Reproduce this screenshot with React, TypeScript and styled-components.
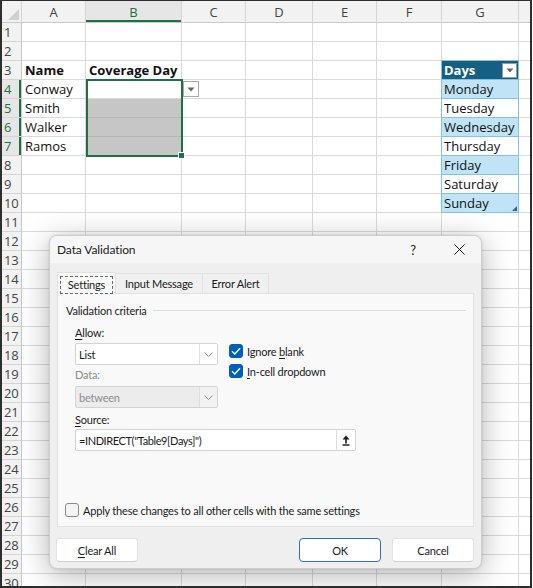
import React from 'react';
import styled, { createGlobalStyle, css } from 'styled-components';

const GlobalStyle = createGlobalStyle`
  html, body { margin: 0; padding: 0; background: #ffffff; }
  body { width: 533px; height: 588px; overflow: hidden; }
`;

const GREEN = '#1e7145';
const BLUE = '#005fb8';
const GRID = '#dadada';

const Frame = styled.div`
  position: relative;
  width: 532px;
  height: 588px;
  box-sizing: border-box;
  border: 2px solid #2e2e2e;
  border-top-width: 1px;
  overflow: hidden;
  font-family: 'Open Sans', 'Noto Sans', sans-serif;
  color: #111;
`;

const Sheet = styled.div`
  display: grid;
  grid-template-columns: 20px 64px 96px 64px 67px 64px 65px 77px 64px;
  grid-template-rows: 22px repeat(30, 19px);
`;

const HeadBase = css`
  box-sizing: border-box;
  background: #f2f2f2;
  color: #444;
  font-size: 13px;
  display: flex;
  align-items: center;
  justify-content: center;
  border-right: 1px solid #d4d4d4;
  border-bottom: 1px solid #d4d4d4;
`;

const Corner = styled.div`
  ${HeadBase};
  position: relative;
  border-bottom-color: #c8c8c8;
  &::after {
    content: '';
    position: absolute;
    right: 2px;
    bottom: 2px;
    border-style: solid;
    border-width: 0 0 11px 11px;
    border-color: transparent transparent #cfcfcf transparent;
  }
`;

const ColHead = styled.div<{ $active?: boolean }>`
  ${HeadBase};
  border-bottom-color: #c8c8c8;
  ${(p) =>
    p.$active &&
    css`
      background: #e6e6e6;
      color: ${GREEN};
      box-shadow: inset 0 -2px 0 ${GREEN};
    `}
`;

const RowHead = styled.div<{ $active?: boolean }>`
  ${HeadBase};
  justify-content: flex-start;
  padding-left: 2px;
  font-size: 13px;
  letter-spacing: -0.3px;
  border-right-color: #c8c8c8;
  ${(p) =>
    p.$active &&
    css`
      background: #e6e6e6;
      color: ${GREEN};
      box-shadow: inset -2px 0 0 ${GREEN};
    `}
`;

const Cell = styled.div<{ $bold?: boolean; $selected?: boolean }>`
  box-sizing: border-box;
  position: relative;
  display: flex;
  align-items: center;
  padding: 0 3px;
  font-size: 13px;
  white-space: nowrap;
  border-right: 1px solid ${GRID};
  border-bottom: 1px solid ${GRID};
  font-weight: ${(p) => (p.$bold ? 700 : 400)};
  ${(p) =>
    p.$selected &&
    css`
      background: #c6c6c6;
      border-color: #b5b5b5;
    `}
`;

const Selection = styled.div`
  position: absolute;
  left: 0;
  top: -1px;
  width: 97px;
  height: 78px;
  box-sizing: border-box;
  border: 2px solid ${GREEN};
  z-index: 3;
  pointer-events: none;
`;

const FillHandle = styled.div`
  position: absolute;
  right: -4px;
  bottom: -4px;
  width: 5px;
  height: 5px;
  background: ${GREEN};
  border: 1px solid #fff;
`;

const CellDropBtn = styled.div`
  margin-left: -2px;
  width: 16px;
  height: 16px;
  box-sizing: border-box;
  background: #fff;
  border: 1px solid #a9a9a9;
  display: flex;
  align-items: center;
  justify-content: center;
`;

const TableCell = styled.div<{ $kind: 'head' | 'band' | 'plain' }>`
  box-sizing: border-box;
  position: relative;
  display: flex;
  align-items: center;
  justify-content: space-between;
  margin-left: -1px;
  padding: 0 1px 0 2px;
  font-size: 13px;
  white-space: nowrap;
  border-left: 1px solid #7fc3e8;
  border-right: 1px solid #7fc3e8;
  border-bottom: 1px solid #7fc3e8;
  background: ${(p) => (p.$kind === 'head' ? '#156082' : p.$kind === 'band' ? '#c0e4f5' : '#ffffff')};
  color: ${(p) => (p.$kind === 'head' ? '#ffffff' : '#111')};
  font-weight: ${(p) => (p.$kind === 'head' ? 700 : 400)};
  ${(p) =>
    p.$kind === 'head' &&
    css`
      margin-top: -1px;
      border-top: 1px solid #7fc3e8;
    `}
`;

const FilterBtn = styled.div`
  width: 15px;
  height: 15px;
  box-sizing: border-box;
  background: #fff;
  border: 1px solid #9a9a9a;
  display: flex;
  align-items: center;
  justify-content: center;
`;

const ResizeMark = styled.div`
  position: absolute;
  right: 1px;
  bottom: 1px;
  border-style: solid;
  border-width: 0 0 5px 5px;
  border-color: transparent transparent #2f62a8 transparent;
`;

const DownTri = () => (
  <svg width="8" height="5" viewBox="0 0 8 5">
    <path d="M0.5 0.5 L7.5 0.5 L4 4.5 Z" fill="#666" />
  </svg>
);

/* ---------- Dialog ---------- */

const Dialog = styled.div`
  position: absolute;
  left: 47px;
  top: 234px;
  width: 433px;
  height: 334px;
  box-sizing: border-box;
  border: 1px solid #cdcdcd;
  border-radius: 8px;
  background: #efefef;
  box-shadow: 0 6px 30px rgba(0, 0, 0, 0.3), 0 0 3px rgba(0, 0, 0, 0.12);
  display: flex;
  flex-direction: column;
  overflow: hidden;
  font-family: 'Lato', 'Noto Sans', sans-serif;
  font-size: 11px;
  letter-spacing: -0.2px;
  color: #1b1b1b;
  z-index: 10;
`;

const TitleBar = styled.div`
  height: 27px;
  flex: none;
  background: #f6f6f6;
  display: flex;
  align-items: center;
  padding-left: 7px;
`;

const Title = styled.div`
  flex: 1;
  font-size: 12px;
  letter-spacing: -0.1px;
`;

const TitleButton = styled.div<{ $w: number }>`
  width: ${(p) => p.$w}px;
  height: 27px;
  display: flex;
  align-items: center;
  justify-content: center;
  font-size: 13px;
`;

const Body = styled.div`
  flex: 1;
  display: flex;
  flex-direction: column;
  padding: 9px 7px 6px;
`;

const Tabs = styled.div`
  display: flex;
  height: 21px;
  align-items: flex-end;
`;

const Tab = styled.div<{ $active?: boolean; $w: number }>`
  width: ${(p) => p.$w}px;
  box-sizing: border-box;
  height: ${(p) => (p.$active ? 22 : 20)}px;
  display: flex;
  align-items: center;
  justify-content: center;
  border: 1px solid #e2e2e2;
  border-bottom: none;
  margin-bottom: ${(p) => (p.$active ? -1 : 0)}px;
  background: ${(p) => (p.$active ? '#f9f9f9' : '#f0f0f0')};
  position: relative;
  z-index: ${(p) => (p.$active ? 2 : 1)};
  & + & {
    margin-left: -1px;
  }
`;

const FocusRect = styled.span`
  border: 1px dashed #6a6a6a;
  padding: 1px 6px 2px;
  margin: 2px 2px 0;
  flex: 1;
  text-align: center;
`;

const Panel = styled.div`
  height: 234px;
  box-sizing: border-box;
  border: 1px solid #e2e2e2;
  background: #f9f9f9;
  display: flex;
  flex-direction: column;
  padding: 8px 7px 8px 8px;
`;

const GroupHead = styled.div`
  display: flex;
  align-items: center;
  height: 16px;
  gap: 6px;
  &::after {
    content: '';
    flex: 1;
    height: 1px;
    background: #dcdcdc;
  }
`;

const Indent = styled.div`
  padding-left: 9px;
  display: flex;
  flex-direction: column;
`;

const TopRow = styled.div`
  display: flex;
  gap: 11px;
  margin-top: 7px;
`;

const LeftCol = styled.div`
  width: 143px;
  display: flex;
  flex-direction: column;
`;

const RightCol = styled.div`
  padding-top: 18px;
  display: flex;
  flex-direction: column;
  gap: 4px;
`;

const Label = styled.div<{ $mt?: number; $disabled?: boolean }>`
  height: 16px;
  line-height: 16px;
  margin-top: ${(p) => p.$mt ?? 0}px;
  color: ${(p) => (p.$disabled ? '#8c8c8c' : '#1b1b1b')};
`;

const Select = styled.div<{ $mt?: number; $disabled?: boolean; $w: number }>`
  width: ${(p) => p.$w}px;
  height: 22px;
  margin-top: ${(p) => p.$mt ?? 0}px;
  box-sizing: border-box;
  border: 1px solid #d3d3d3;
  border-radius: 2px;
  background: ${(p) => (p.$disabled ? '#ececec' : '#ffffff')};
  color: ${(p) => (p.$disabled ? '#8c8c8c' : '#1b1b1b')};
  display: flex;
  align-items: stretch;
`;

const SelectText = styled.div<{ $tight?: boolean }>`
  flex: 1;
  display: flex;
  align-items: center;
  padding-left: 3px;
  white-space: nowrap;
  letter-spacing: ${(p) => (p.$tight ? '-0.4px' : 'inherit')};
`;

const SelectBtn = styled.div<{ $disabled?: boolean }>`
  width: 17px;
  border-left: 1px solid #dedede;
  background: ${(p) => (p.$disabled ? '#f2f2f2' : '#ffffff')};
  display: flex;
  align-items: center;
  justify-content: center;
`;

const Check = styled.div`
  display: flex;
  align-items: center;
  gap: 4px;
  height: 16px;
`;

const Box = styled.div<{ $checked?: boolean }>`
  width: 14px;
  height: 14px;
  box-sizing: border-box;
  border-radius: 3px;
  background: ${(p) => (p.$checked ? BLUE : '#f4f4f4')};
  border: 1px solid ${(p) => (p.$checked ? BLUE : '#8a8a8a')};
  display: flex;
  align-items: center;
  justify-content: center;
`;

const ApplyRow = styled(Check)`
  margin-top: auto;
  margin-left: -1px;
`;

const Buttons = styled.div`
  display: flex;
  margin-top: 11px;
  margin-left: -1px;
  gap: 11px;
`;

const Button = styled.div<{ $default?: boolean; $push?: boolean }>`
  width: 82px;
  height: 24px;
  box-sizing: border-box;
  border-radius: 4px;
  background: #ffffff;
  border: 1px solid ${(p) => (p.$default ? '#2a6fc0' : '#e1e1e1')};
  border-bottom-color: ${(p) => (p.$default ? '#2a6fc0' : '#cfcfcf')};
  display: flex;
  align-items: center;
  justify-content: center;
  margin-left: ${(p) => (p.$push ? 'auto' : '0')};
`;

const Chevron = () => (
  <svg width="9" height="5" viewBox="0 0 9 5">
    <path d="M0.5 0.5 L4.5 4.5 L8.5 0.5" fill="none" stroke="#8a8a8a" strokeWidth="1" />
  </svg>
);

const Tick = () => (
  <svg width="10" height="8" viewBox="0 0 10 8">
    <path d="M1 4.2 L3.8 7 L9 1.2" fill="none" stroke="#fff" strokeWidth="1.4" />
  </svg>
);

const U = styled.span`
  text-decoration: underline;
  text-underline-offset: 2px;
`;

const SourceBtn = styled(SelectBtn)`
  width: 18px;
`;

const UploadIcon = () => (
  <svg width="8" height="11" viewBox="0 0 8 11">
    <path d="M4 0.5 L7.5 4.5 L0.5 4.5 Z" fill="#1b1b1b" />
    <rect x="3.2" y="4" width="1.6" height="4.5" fill="#1b1b1b" />
    <rect x="0.5" y="9.3" width="7" height="1.4" fill="#1b1b1b" />
  </svg>
);

const CloseIcon = () => (
  <svg width="11" height="11" viewBox="0 0 11 11">
    <path d="M0.5 0.5 L10.5 10.5 M10.5 0.5 L0.5 10.5" stroke="#1b1b1b" strokeWidth="1" />
  </svg>
);

const COLS = ['A', 'B', 'C', 'D', 'E', 'F', 'G', 'H'];
const DAYS = ['Monday', 'Tuesday', 'Wednesday', 'Thursday', 'Friday', 'Saturday', 'Sunday'];
const DATA: Record<string, { text: string; bold?: boolean }> = {
  A3: { text: 'Name', bold: true },
  B3: { text: 'Coverage Day', bold: true },
  A4: { text: 'Conway' },
  A5: { text: 'Smith' },
  A6: { text: 'Walker' },
  A7: { text: 'Ramos' },
};

function renderCell(c: string, r: number) {
  const key = c + r;
  if (c === 'G' && r >= 3 && r <= 10) {
    if (r === 3)
      return (
        <TableCell key={key} $kind="head">
          <span>Days</span>
          <FilterBtn>
            <DownTri />
          </FilterBtn>
        </TableCell>
      );
    const i = r - 4;
    return (
      <TableCell key={key} $kind={i % 2 === 0 ? 'band' : 'plain'}>
        {DAYS[i]}
        {r === 10 && <ResizeMark />}
      </TableCell>
    );
  }
  if (c === 'B' && r === 4)
    return (
      <Cell key={key}>
        <Selection>
          <FillHandle />
        </Selection>
      </Cell>
    );
  if (c === 'B' && r >= 5 && r <= 7) return <Cell key={key} $selected />;
  if (c === 'C' && r === 4)
    return (
      <Cell key={key}>
        <CellDropBtn>
          <DownTri />
        </CellDropBtn>
      </Cell>
    );
  const d = DATA[key];
  return (
    <Cell key={key} $bold={d?.bold}>
      {d?.text}
    </Cell>
  );
}

export default function App() {
  const cells: React.ReactNode[] = [<Corner key="corner" />];
  COLS.forEach((c) =>
    cells.push(
      <ColHead key={'h' + c} $active={c === 'B'}>
        {c === 'H' ? '' : c}
      </ColHead>
    )
  );
  for (let r = 1; r <= 30; r++) {
    cells.push(
      <RowHead key={'r' + r} $active={r >= 4 && r <= 7}>
        {r}
      </RowHead>
    );
    COLS.forEach((c) => cells.push(renderCell(c, r)));
  }

  return (
    <>
      <GlobalStyle />
      <Frame>
        <Sheet>{cells}</Sheet>
        <Dialog>
          <TitleBar>
            <Title>Data Validation</Title>
            <TitleButton $w={48}>?</TitleButton>
            <TitleButton $w={44}>
              <CloseIcon />
            </TitleButton>
          </TitleBar>
          <Body>
            <Tabs>
              <Tab $active $w={59}>
                <FocusRect>Settings</FocusRect>
              </Tab>
              <Tab $w={88}>Input Message</Tab>
              <Tab $w={67}>Error Alert</Tab>
            </Tabs>
            <Panel>
              <GroupHead>Validation criteria</GroupHead>
              <Indent>
                <TopRow>
                  <LeftCol>
                    <Label>
                      <U>A</U>llow:
                    </Label>
                    <Select $w={143} $mt={2}>
                      <SelectText>List</SelectText>
                      <SelectBtn>
                        <Chevron />
                      </SelectBtn>
                    </Select>
                    <Label $mt={2} $disabled>
                      Data:
                    </Label>
                    <Select $w={143} $mt={3} $disabled>
                      <SelectText>between</SelectText>
                      <SelectBtn $disabled>
                        <Chevron />
                      </SelectBtn>
                    </Select>
                  </LeftCol>
                  <RightCol>
                    <Check>
                      <Box $checked>
                        <Tick />
                      </Box>
                      <span>
                        Ignore <U>b</U>lank
                      </span>
                    </Check>
                    <Check>
                      <Box $checked>
                        <Tick />
                      </Box>
                      <span>
                        <U>I</U>n-cell dropdown
                      </span>
                    </Check>
                  </RightCol>
                </TopRow>
                <Label $mt={4}>
                  <U>S</U>ource:
                </Label>
                <Select $w={281} $mt={1}>
                  <SelectText $tight>=INDIRECT("Table9[Days]")</SelectText>
                  <SourceBtn>
                    <UploadIcon />
                  </SourceBtn>
                </Select>
              </Indent>
              <ApplyRow>
                <Box />
                <span>Apply these changes to all other cells with the same settings</span>
              </ApplyRow>
            </Panel>
            <Buttons>
              <Button>
                <span>
                  <U>C</U>lear All
                </span>
              </Button>
              <Button $default $push>
                OK
              </Button>
              <Button>Cancel</Button>
            </Buttons>
          </Body>
        </Dialog>
      </Frame>
    </>
  );
}
